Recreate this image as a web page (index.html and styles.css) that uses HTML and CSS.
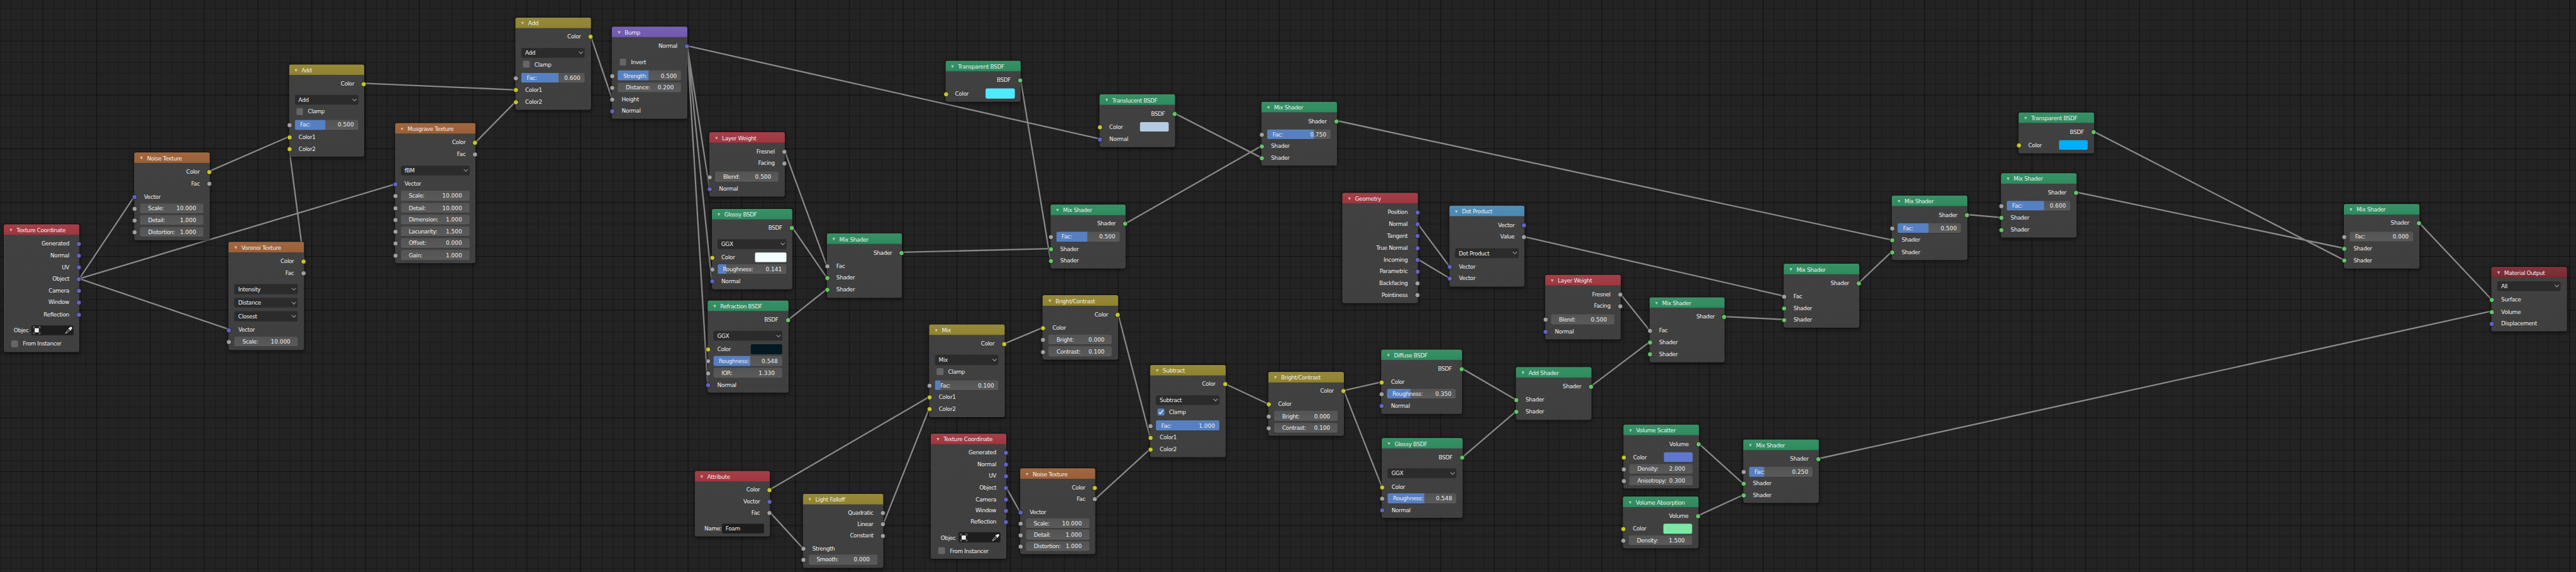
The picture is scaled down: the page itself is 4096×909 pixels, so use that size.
FILE: index.html
```
<!DOCTYPE html>
<html lang="en">
<head>
<meta charset="utf-8">
<title>Shader Editor</title>
<link rel="stylesheet" href="styles.css">
</head>
<body>
<main class="viewport">
<div class="stage">

<svg class="backdrop" width="4838" height="1074" viewBox="0 0 4838 1074" aria-hidden="true">
  <g class="grid minor">
    <path d="M-.2 537H4838" stroke-width="1074" stroke-dasharray="1 19.192"/>
    <path d="M2419 -4.2V1074" stroke-width="4838" stroke-dasharray="1 19.2"/>
  </g>
  <g class="grid major">
    <path d="M-21 537H4838" stroke-width="1074" stroke-dasharray="1 99.96"/>
    <path d="M2419 -24.2V1074" stroke-width="4838" stroke-dasharray="1 100"/>
  </g>
  <defs>
    <path id="links" d="M149 523L252.300 368.700M149 523L742 345.700M149 523L429.400 618M393.800 321.200L543 256.300M570.700 489.700L543 278.700M683.800 156.300L968.500 168.700M893 267.300L968.500 190.700M1109.700 68.500L1149.600 185.700M1290.900 86L1332.300 353.300M1290.900 86L1336.700 526.900M1290.900 86L1329 721.800M1290.900 86L2065.300 260.500M1473.900 284L1552.700 499M1488 427L1552.700 521M1480.700 600L1552.700 543M1694.200 473.500L1973 466.700M1917 150.500L1973 488.700M2114.300 419.300L2369 274M2206.800 213L2369 296M2510.500 226.500L3553 450.500M1445.800 919L1745 745M1445.800 961.300L1507.700 1029M1659.200 982.800L1745 767.200M1886.600 645L1958.400 615M2100 589.800L2160 820.800M2057.200 936.500L2160 843M1889.900 915.200L1915.700 961M2301.700 720.800L2382 758.300M2523.800 733L2594 717M2523.800 733L2595.300 913.700M2746 691.700L2847 750.300M2747 858L2847 772.300M2988.500 724.700L3098 642M3043.400 552L3098 620M3239.300 594.300L3350 599.700M2662.700 420L2722 500M2662.700 486.500L2722 522M2863.400 444.500L3350 555.500M3491.800 530.300L3553 472.300M3694.800 402.800L3758 408.300M3899.800 360.800L4402 466M3932.500 247L4402 488M4543.500 418.300L4679.500 562.200M3415.700 860.800L4679.500 584M3190.800 833L3274 908M3190 967.500L3274 929"/>
    <symbol id="object-icon" viewBox="0 0 14 14">
      <path d="M.5 4V.5H4M10 .5H13.500V4M13.500 10V13.500H10M4 13.500H.5V10" fill="none" stroke="#b9b9b9"/>
      <rect x="3" y="3" width="8" height="8" fill="#ececec"/>
    </symbol>
    <symbol id="dropper-icon" viewBox="0 0 14 14">
      <path d="M9 1.600Q11.400-.6 13 1.100T12.200 5L11.200 6 11.700 6.700 10.700 7.700 6.300 3.300 7.300 2.300 8 2.700Z" fill="#ececec"/>
      <path d="M7.300 4.900L2.500 9.700Q2.200 11.500 .9 13.100 2.700 11.900 4.300 11.500L9.100 6.700" fill="none" stroke="#ececec"/>
    </symbol>
    <symbol id="check-icon" viewBox="0 0 12 12">
      <path d="M2.500 6.200L5 9 10 2.800" fill="none" stroke="#f2f2f2" stroke-width="1.700"/>
    </symbol>
  </defs>
  <use class="link-edge" href="#links"/>
  <use class="link" href="#links"/>
</svg>

<section class="node red" style="left:7.3px;top:421px;height:239.7px"><h2>Texture Coordinate</h2>
<p class="out vec">Generated</p><p class="out vec">Normal</p><p class="out vec">UV</p><p class="out vec">Object</p><p class="out vec">Camera</p><p class="out vec">Window</p><p class="out vec">Reflection</p>
<p class="prop pick"><span>Objec</span><span class="text"><svg><use href="#object-icon"/></svg><svg><use href="#dropper-icon"/></svg></span></p>
<p class="prop check"><i></i>From Instancer</p></section>

<section class="node orange" style="left:252.3px;top:286px;height:164.7px"><h2>Noise Texture</h2>
<p class="out col">Color</p><p class="out val">Fac</p>
<p class="in vec">Vector</p><p class="in val"><span class="num">Scale:<b>10.000</b></span></p><p class="in val"><span class="num">Detail:<b>1.000</b></span></p><p class="in val"><span class="num">Distortion:<b>1.000</b></span></p></section>

<section class="node orange" style="left:429.4px;top:454px;height:202.7px"><h2>Voronoi Texture</h2>
<p class="out col">Color</p><p class="out val">Fac</p>
<p class="prop menu"><span>Intensity</span></p><p class="prop menu"><span>Distance</span></p><p class="prop menu"><span>Closest</span></p>
<p class="in vec">Vector</p><p class="in val"><span class="num">Scale:<b>10.000</b></span></p></section>

<section class="node olive" style="left:542.6px;top:121px;height:173px"><h2>Add</h2>
<p class="out col">Color</p>
<p class="prop menu"><span>Add</span></p><p class="prop check"><i></i>Clamp</p>
<p class="in val"><span class="slider" style="--v:50%">Fac:<b>0.500</b></span></p><p class="in col">Color1</p><p class="in col">Color2</p></section>

<section class="node orange wide" style="left:741.7px;top:231.3px;height:262.7px"><h2>Musgrave Texture</h2>
<p class="out col">Color</p><p class="out val">Fac</p>
<p class="prop menu"><span>fBM</span></p>
<p class="in vec">Vector</p><p class="in val"><span class="num">Scale:<b>10.000</b></span></p><p class="in val"><span class="num">Detail:<b>10.000</b></span></p><p class="in val"><span class="num">Dimension:<b>1.000</b></span></p><p class="in val"><span class="num">Lacunarity:<b>1.500</b></span></p><p class="in val"><span class="num">Offset:<b>0.000</b></span></p><p class="in val"><span class="num">Gain:<b>1.000</b></span></p></section>

<section class="node olive" style="left:968.2px;top:32.5px;height:173.5px"><h2>Add</h2>
<p class="out col">Color</p>
<p class="prop menu"><span>Add</span></p><p class="prop check"><i></i>Clamp</p>
<p class="in val"><span class="slider" style="--v:60%">Fac:<b>0.600</b></span></p><p class="in col">Color1</p><p class="in col">Color2</p></section>

<section class="node purple" style="left:1149.4px;top:50.2px;height:173.1px"><h2>Bump</h2>
<p class="out vec">Normal</p>
<p class="prop check"><i></i>Invert</p>
<p class="in val"><span class="slider" style="--v:50%">Strength:<b>0.500</b></span></p><p class="in val"><span class="num">Distance:<b>0.200</b></span></p><p class="in val">Height</p><p class="in vec">Normal</p></section>

<section class="node red" style="left:1332.3px;top:248.4px;height:120.7px"><h2>Layer Weight</h2>
<p class="out val">Fresnel</p><p class="out val">Facing</p>
<p class="in val"><span class="num">Blend:<b>0.500</b></span></p><p class="in vec">Normal</p></section>

<section class="node green wide" style="left:1336.6px;top:391.5px;height:151.2px"><h2>Glossy BSDF</h2>
<p class="out shd">BSDF</p>
<p class="prop menu"><span>GGX</span></p>
<p class="in col">Color<span class="swatch" style="background:#f4ffff"></span></p><p class="in val"><span class="slider" style="--v:14.1%">Roughness:<b>0.141</b></span></p><p class="in vec">Normal</p></section>

<section class="node green wide" style="left:1329px;top:564.2px;height:172.7px"><h2>Refraction BSDF</h2>
<p class="out shd">BSDF</p>
<p class="prop menu"><span>GGX</span></p>
<p class="in col">Color<span class="swatch" style="background:#021921"></span></p><p class="in val"><span class="slider" style="--v:54.8%">Roughness:<b>0.548</b></span></p><p class="in val"><span class="num">IOR:<b>1.330</b></span></p><p class="in vec">Normal</p></section>

<section class="node green" style="left:1552.6px;top:438px;height:120.5px"><h2>Mix Shader</h2>
<p class="out shd">Shader</p>
<p class="in val">Fac</p><p class="in shd">Shader</p><p class="in shd">Shader</p></section>

<section class="node red" style="left:1304.5px;top:884px;height:122.9px"><h2>Attribute</h2>
<p class="out col">Color</p><p class="out vec">Vector</p><p class="out val">Fac</p>
<p class="prop pick"><span>Name:</span><span class="text">Foam</span></p></section>

<section class="node olive wide" style="left:1507.6px;top:926.5px;height:139px"><h2>Light Falloff</h2>
<p class="out val">Quadratic</p><p class="out val">Linear</p><p class="out val">Constant</p>
<p class="in val">Strength</p><p class="in val"><span class="num">Smooth:<b>0.000</b></span></p></section>

<section class="node olive" style="left:1745px;top:609.3px;height:173.4px"><h2>Mix</h2>
<p class="out col">Color</p>
<p class="prop menu"><span>Mix</span></p><p class="prop check"><i></i>Clamp</p>
<p class="in val"><span class="slider" style="--v:10%">Fac:<b>0.100</b></span></p><p class="in col">Color1</p><p class="in col">Color2</p></section>

<section class="node red" style="left:1748.3px;top:813.7px;height:235.3px"><h2>Texture Coordinate</h2>
<p class="out vec">Generated</p><p class="out vec">Normal</p><p class="out vec">UV</p><p class="out vec">Object</p><p class="out vec short">Camera</p><p class="out vec short">Window</p><p class="out vec short">Reflection</p>
<p class="prop pick"><span>Objec</span><span class="text"><svg><use href="#object-icon"/></svg><svg><use href="#dropper-icon"/></svg></span></p>
<p class="prop check"><i></i>From Instancer</p></section>

<section class="node orange" style="left:1915.6px;top:879.3px;height:160.7px"><h2>Noise Texture</h2>
<p class="out col">Color</p><p class="out val">Fac</p>
<p class="in vec">Vector</p><p class="in val"><span class="num">Scale:<b>10.000</b></span></p><p class="in val"><span class="num">Detail:<b>1.000</b></span></p><p class="in val"><span class="num">Distortion:<b>1.000</b></span></p></section>

<section class="node olive" style="left:1958.4px;top:554px;height:121px"><h2>Bright/Contrast</h2>
<p class="out col">Color</p>
<p class="in col">Color</p><p class="in val"><span class="num">Bright:<b>0.000</b></span></p><p class="in val"><span class="num">Contrast:<b>0.100</b></span></p></section>

<section class="node olive" style="left:2160px;top:684.7px;height:173.8px"><h2>Subtract</h2>
<p class="out col">Color</p>
<p class="prop menu"><span>Subtract</span></p><p class="prop check on"><i><svg><use href="#check-icon"/></svg></i>Clamp</p>
<p class="in val"><span class="slider" style="--v:102%">Fac:<b>1.000</b></span></p><p class="in col">Color1</p><p class="in col">Color2</p></section>

<section class="node green" style="left:1775.5px;top:114.2px;height:76.8px"><h2>Transparent BSDF</h2>
<p class="out shd">BSDF</p>
<p class="in col">Color<span class="swatch" style="background:#51e9ff"></span></p></section>

<section class="node green" style="left:2065.2px;top:177px;height:99px"><h2>Translucent BSDF</h2>
<p class="out shd">BSDF</p>
<p class="in col">Color<span class="swatch" style="background:#b5cbe1"></span></p><p class="in vec">Normal</p></section>

<section class="node green" style="left:2369px;top:191px;height:120px"><h2>Mix Shader</h2>
<p class="out shd">Shader</p>
<p class="in val"><span class="slider" style="--v:75%">Fac:<b>0.750</b></span></p><p class="in shd">Shader</p><p class="in shd">Shader</p></section>

<section class="node green" style="left:1972.8px;top:383.5px;height:120.5px"><h2>Mix Shader</h2>
<p class="out shd">Shader</p>
<p class="in val"><span class="slider" style="--v:50%">Fac:<b>0.500</b></span></p><p class="in shd">Shader</p><p class="in shd">Shader</p></section>

<section class="node olive" style="left:2382.1px;top:697.5px;height:120.5px"><h2>Bright/Contrast</h2>
<p class="out col">Color</p>
<p class="in col">Color</p><p class="in val"><span class="num">Bright:<b>0.000</b></span></p><p class="in val"><span class="num">Contrast:<b>0.100</b></span></p></section>

<section class="node green wide" style="left:2594.2px;top:656px;height:120.5px"><h2>Diffuse BSDF</h2>
<p class="out shd">BSDF</p>
<p class="in col">Color</p><p class="in val"><span class="slider" style="--v:35%">Roughness:<b>0.350</b></span></p><p class="in vec">Normal</p></section>

<section class="node green wide" style="left:2595.3px;top:822px;height:149.7px"><h2>Glossy BSDF</h2>
<p class="out shd">BSDF</p>
<p class="prop menu"><span>GGX</span></p>
<p class="in col">Color</p><p class="in val short"><span class="slider" style="--v:54.8%">Roughness:<b>0.548</b></span></p><p class="in vec short">Normal</p></section>

<section class="node green" style="left:2847px;top:689px;height:98.7px"><h2>Add Shader</h2>
<p class="out shd">Shader</p>
<p class="in shd">Shader</p><p class="in shd">Shader</p></section>

<section class="node red" style="left:2521px;top:362px;height:206.8px"><h2>Geometry</h2>
<p class="out vec">Position</p><p class="out vec">Normal</p><p class="out vec">Tangent</p><p class="out vec">True Normal</p><p class="out vec">Incoming</p><p class="out vec">Parametric</p><p class="out val">Backfacing</p><p class="out val">Pointiness</p></section>

<section class="node blue" style="left:2721.8px;top:386.3px;height:151.4px"><h2>Dot Product</h2>
<p class="out vec">Vector</p><p class="out val">Value</p>
<p class="prop menu"><span>Dot Product</span></p>
<p class="in vec">Vector</p><p class="in vec">Vector</p></section>

<section class="node red" style="left:2901.9px;top:515.8px;height:121.5px"><h2>Layer Weight</h2>
<p class="out val">Fresnel</p><p class="out val">Facing</p>
<p class="in val"><span class="num">Blend:<b>0.500</b></span></p><p class="in vec">Normal</p></section>

<section class="node green" style="left:3097.8px;top:558.3px;height:121.7px"><h2>Mix Shader</h2>
<p class="out shd">Shader</p>
<p class="in val">Fac</p><p class="in shd">Shader</p><p class="in shd">Shader</p></section>

<section class="node green" style="left:3049px;top:797.3px;height:119.7px"><h2>Volume Scatter</h2>
<p class="out shd">Volume</p>
<p class="in col">Color<span class="swatch" style="background:#5f78cd"></span></p><p class="in val"><span class="num">Density:<b>2.000</b></span></p><p class="in val"><span class="num">Anisotropy:<b>0.300</b></span></p></section>

<section class="node green" style="left:3048.3px;top:932.3px;height:96.7px"><h2>Volume Absorption</h2>
<p class="out shd">Volume</p>
<p class="in col">Color<span class="swatch" style="background:#7be9a4"></span></p><p class="in val"><span class="num">Density:<b>1.500</b></span></p></section>

<section class="node green" style="left:3274px;top:825px;height:119px"><h2>Mix Shader</h2>
<p class="out shd">Shader</p>
<p class="in val"><span class="slider" style="--v:25%">Fac:<b>0.250</b></span></p><p class="in shd">Shader</p><p class="in shd">Shader</p></section>

<section class="node green" style="left:3791px;top:211px;height:76.7px"><h2>Transparent BSDF</h2>
<p class="out shd">BSDF</p>
<p class="in col">Color<span class="swatch" style="background:#00adff"></span></p></section>

<section class="node green" style="left:3758.1px;top:324.8px;height:121.2px"><h2>Mix Shader</h2>
<p class="out shd">Shader</p>
<p class="in val"><span class="slider" style="--v:60%">Fac:<b>0.600</b></span></p><p class="in shd">Shader</p><p class="in shd">Shader</p></section>

<section class="node green" style="left:3553.2px;top:367px;height:121px"><h2>Mix Shader</h2>
<p class="out shd">Shader</p>
<p class="in val"><span class="slider" style="--v:50%">Fac:<b>0.500</b></span></p><p class="in shd">Shader</p><p class="in shd">Shader</p></section>

<section class="node green" style="left:3350.1px;top:495px;height:120px"><h2>Mix Shader</h2>
<p class="out shd">Shader</p>
<p class="in val">Fac</p><p class="in shd">Shader</p><p class="in shd">Shader</p></section>

<section class="node green" style="left:4402px;top:382.7px;height:121.1px"><h2>Mix Shader</h2>
<p class="out shd">Shader</p>
<p class="in val"><span class="slider" style="--v:0%">Fac:<b>0.000</b></span></p><p class="in shd">Shader</p><p class="in shd">Shader</p></section>

<section class="node maroon" style="left:4679.4px;top:501.2px;height:120.9px"><h2>Material Output</h2>
<p class="prop menu"><span>All</span></p>
<p class="in shd">Surface</p><p class="in shd">Volume</p><p class="in vec">Displacement</p></section>

</div>
</main>
</body>
</html>
```
FILE: styles.css
```
* { box-sizing: border-box; }

body { margin: 0; background: #232323; }

.viewport {
  width: 4096px;
  height: 909px;
  overflow: hidden;
  background: #232323;
}

.stage {
  position: relative;
  width: 4838px;
  height: 1074px;
  transform: scale(.84663);
  transform-origin: 0 0;
  font-family: "DejaVu Sans", sans-serif;
  font-size: 10.5px;
  letter-spacing: -.42px;
  line-height: 14px;
  color: #efefef;
}

/* Canvas grid and node links */
.backdrop { display: block; }
.grid { fill: none; }
.minor { stroke: #1a1a1a; }
.major { stroke: #131313; }
.link-edge, .link { fill: none; }
.link-edge { stroke: #171717; stroke-opacity: .35; stroke-width: 4.4px; }
.link { stroke: #888; stroke-width: 2.8px; }

/* Node frame */
.node {
  position: absolute;
  display: flex;
  flex-direction: column;
  width: 141.7px;
  padding-bottom: 4.3px;
  border-radius: 4px;
  background: linear-gradient(rgba(67, 67, 67, .94), rgba(65, 65, 65, .94));
  box-shadow: 0 0 0 1px rgba(0, 0, 0, .3), 0 2px 8px rgba(0, 0, 0, .55);
}
.wide { width: 151.6px; }

.node h2 {
  flex: none;
  display: flex;
  align-items: center;
  gap: 7.6px;
  height: 20px;
  margin: 0 0 4.7px;
  padding: 1px 0 0 10.6px;
  border-radius: 4px 4px 0 0;
  background: linear-gradient(rgba(255, 255, 255, .05), rgba(255, 255, 255, 0)), var(--head);
  box-shadow: inset 0 -1px rgba(0, 0, 0, .08);
  font: inherit;
  white-space: nowrap;
}
.node h2::before {
  content: "";
  width: 5.600px;
  height: 5.600px;
  margin-top: 1px;
  background: rgba(255, 255, 255, .6);
  clip-path: polygon(0 0, 100% 0, 50% 100%);
}
.red { --head: rgba(163, 53, 63, .97); }
.maroon { --head: #7d2931; }
.orange { --head: rgba(164, 98, 54, .93); }
.olive { --head: #90832f; }
.purple { --head: #7059b0; }
.green { --head: #2e8b5e; }
.blue { --head: #4a88b2; }

/* Rows share the height left under the header */
.node p {
  position: relative;
  flex: 22 0 0;
  display: flex;
  align-items: center;
  min-height: 0;
  margin: 0;
  padding: 0 11.6px 0 11px;
  white-space: nowrap;
}
.node .short { flex-grow: 21; }
.node .out { justify-content: flex-end; padding-right: 19px; }
.node .in { padding-left: 18.2px; }
.node .in:has(.num), .node .in:has(.slider) { padding-left: 11px; }
.node .out + .in,
.node .prop + .in,
.node .menu + .menu,
.node .pick + .check { margin-top: 3.2px; }
.node .out + .prop { margin-top: 8.2px; }

/* Sockets straddle the node edge */
.in::before, .out::after {
  content: "";
  position: absolute;
  top: calc(50% - 4px);
  width: 8px;
  height: 8px;
  border: 1px solid #1b1b1b;
  border-radius: 50%;
  background: var(--socket);
}
.in::before { left: -4px; }
.out::after { right: -4px; }
.col { --socket: #c7c729; }
.val { --socket: #a1a1a1; }
.vec { --socket: #6363c7; }
.shd { --socket: #63c763; }

/* Widgets */
.num, .slider, .menu span, .text {
  display: flex;
  align-items: center;
  flex: 1;
  height: 18.2px;
  border-radius: 3px;
  box-shadow: 0 1px rgba(0, 0, 0, .12);
}
.num, .slider {
  justify-content: space-between;
  background: linear-gradient(#545454, #5a5a5a);
}
.num { padding: 0 14px 0 15px; }
.slider {
  position: relative;
  padding: 0 8.2px 0 10px;
  overflow: hidden;
  isolation: isolate;
}
.slider::before {
  content: "";
  position: absolute;
  z-index: -1;
  inset: 0 auto 0 0;
  width: calc(var(--v) - 1.7px);
  background: #5680c2;
}
.node b { font-weight: normal; letter-spacing: .05px; }

.menu span {
  justify-content: space-between;
  padding: 0 3px 0 7px;
  background: #2b2b2b;
}
.menu span::after {
  content: "";
  width: 5px;
  height: 5px;
  margin: -3px 1px 0 0;
  border: solid #b5b5b5;
  border-width: 0 1.400px 1.400px 0;
  transform: rotate(45deg);
}

.node .check { gap: 9px; padding-left: 14.2px; }
.check i {
  width: 12.4px;
  height: 12.8px;
  border-radius: 2.500px;
  background: #666;
}
.check i svg { display: block; width: 100%; height: 100%; }
.on i { background: #5680c2; }

.node .pick { justify-content: space-between; padding: 0 11.4px 0 18.4px; }
.pick .text {
  flex: none;
  justify-content: space-between;
  width: 78.8px;
  padding: 0 2px 0 6.8px;
  background: #1d1d1d;
}
.pick .text:has(svg) { padding-left: 3.600px; }
.text svg { width: 14px; height: 14px; }

.swatch {
  width: 54.2px;
  height: 18.2px;
  margin-left: auto;
  border-radius: 3px;
}
.wide .swatch { width: 59px; }
```
